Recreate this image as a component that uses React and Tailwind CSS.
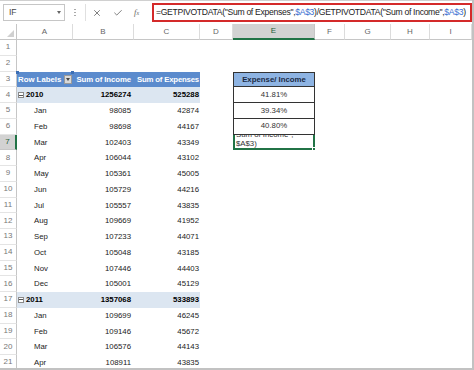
import { X, Check } from 'lucide-react';

// Column letters of the sheet; index 0 is the row-number column
const COLS = ['', 'A', 'B', 'C', 'D', 'E', 'F', 'G', 'H', 'I'];

const FONT = { fontFamily: '"Liberation Sans", Arial, sans-serif' };

const months2010 = [
  ['Jan', 98085, 42874],
  ['Feb', 98698, 44167],
  ['Mar', 102403, 43349],
  ['Apr', 106044, 43102],
  ['May', 105361, 45005],
  ['Jun', 105729, 44216],
  ['Jul', 105557, 43835],
  ['Aug', 109669, 41952],
  ['Sep', 107233, 44071],
  ['Oct', 105048, 43185],
  ['Nov', 107446, 44403],
  ['Dec', 105001, 45129],
];

const months2011 = [
  ['Jan', 109699, 46245],
  ['Feb', 109146, 45672],
  ['Mar', 106576, 44143],
  ['Apr', 108911, 43835],
];

const ratios = ['41.81%', '39.34%', '40.80%'];

function Collapse() {
  return (
    <span className="inline-flex items-center justify-center w-[6px] h-[6px] border border-[#8a8a8a] mr-[2px] bg-white">
      <span className="block w-[4px] h-px bg-[#555]" />
    </span>
  );
}

function RowNum({ n, active }) {
  return (
    <div
      className={`flex items-center justify-center text-[8px] border-b ${
        active
          ? 'bg-[#d2d2d2] text-[#1e5e3a] border-r-2 border-r-[#217346] border-b-[#c6c6c6]'
          : 'bg-white text-[#777] border-r border-r-[#c6c6c6] border-b-[#e4e4e4]'
      }`}
    >
      {n}
    </div>
  );
}

function cellsFor(r) {
  let a = <div />, b = <div />, c = <div />, e = <div />;

  if (r === 3) {
    a = (
      <div className="relative bg-[#5b8bcd] text-white font-bold text-[7.8px] flex items-center pl-[1px] whitespace-nowrap">
        Row Labels
        <span className="absolute right-[1px] top-[3px] w-[8px] h-[9px] bg-[#d9d9d9] border border-[#9a9a9a] flex items-center justify-center">
          <span className="block w-0 h-0 border-l-[2.5px] border-r-[2.5px] border-t-[3px] border-l-transparent border-r-transparent border-t-[#444]" />
        </span>
        <span className="absolute left-[-1px] top-[-1px] w-[3px] h-[3px] bg-[#3c6fb5]" />
        <span className="absolute right-[-1px] top-[-1px] w-[3px] h-[3px] bg-[#3c6fb5]" />
      </div>
    );
    b = (
      <div className="bg-[#5b8bcd] text-white font-bold text-[7.8px] flex items-center justify-end pr-[3px] whitespace-nowrap tracking-[-0.1px]">
        Sum of Income
      </div>
    );
    c = (
      <div className="bg-[#5b8bcd] text-white font-bold text-[7.8px] flex items-center justify-end pr-[1px] whitespace-nowrap tracking-[-0.2px]">
        Sum of Expenses
      </div>
    );
    e = (
      <div className="bg-[#8eb4e3] border border-[#333] text-[#1b2a44] font-bold text-[7.8px] flex items-center justify-center whitespace-nowrap">
        Expense/ Income
      </div>
    );
  } else if (r === 4 || r === 17) {
    const [year, inc, exp] = r === 4 ? ['2010', 1256274, 525288] : ['2011', 1357068, 533893];
    a = (
      <div className="bg-[#dce6f1] font-bold text-[7.8px] text-black flex items-center pl-[1px]">
        <Collapse />
        {year}
      </div>
    );
    b = (
      <div className="bg-[#dce6f1] font-bold text-[7.8px] text-black flex items-center justify-end pr-[3px]">
        {inc}
      </div>
    );
    c = (
      <div className="bg-[#dce6f1] font-bold text-[7.8px] text-black flex items-center justify-end pr-[1px]">
        {exp}
      </div>
    );
  } else {
    let m = null;
    if (r >= 5 && r <= 16) m = months2010[r - 5];
    if (r >= 18) m = months2011[r - 18];
    if (m) {
      a = <div className="text-[7.8px] text-[#222] flex items-center pl-[17px]">{m[0]}</div>;
      b = <div className="text-[7.8px] text-[#222] flex items-center justify-end pr-[3px]">{m[1]}</div>;
      c = <div className="text-[7.8px] text-[#222] flex items-center justify-end pr-[1px]">{m[2]}</div>;
    }
  }

  if (r >= 4 && r <= 6) {
    e = (
      <div className="border-x border-b border-[#333] text-[7.8px] text-[#333] flex items-center justify-center">
        {ratios[r - 4]}
      </div>
    );
  }
  if (r === 7) {
    // Cell in edit mode: the wrapped formula's first line is clipped by the row above
    e = (
      <div className="relative border-x-2 border-b-2 border-[#217346] text-[7.8px] text-[#333] leading-[8px]">
        <div className="absolute inset-0 overflow-hidden">
          <div className="absolute left-[1px] top-[-4px] whitespace-nowrap">Sum of Income",</div>
          <div className="absolute left-[1px] top-[5px]">$A$3)</div>
        </div>
        <span className="absolute right-[-3px] bottom-[-3px] w-[4px] h-[4px] bg-[#217346] border border-white" />
      </div>
    );
  }

  return [a, b, c, <div />, e, <div />, <div />, <div />, <div />];
}

export default function App() {
  const rows = Array.from({ length: 21 }, (_, i) => i + 1);

  return (
    <div
      className="w-[474px] h-[370px] overflow-hidden bg-white border-r-2 border-b-2 border-[#c2c2c2] flex flex-col"
      style={FONT}
    >
      {/* ── Formula bar ─────────────────────────────────────────── */}
      <div className="h-[24px] shrink-0 flex items-center border-t border-[#d0d0d0] bg-white">
        <div className="ml-[3px] w-[62px] h-[17px] border border-[#c6c6c6] flex items-center justify-between pl-[5px] pr-[3px] text-[8.5px] text-[#444]">
          IF
          <span className="block w-0 h-0 border-l-[2.5px] border-r-[2.5px] border-t-[3px] border-l-transparent border-r-transparent border-t-[#666]" />
        </div>
        <div className="w-[20px] flex flex-col items-center gap-[1.5px]">
          <span className="block w-[1.5px] h-[1.5px] bg-[#aaa]" />
          <span className="block w-[1.5px] h-[1.5px] bg-[#aaa]" />
          <span className="block w-[1.5px] h-[1.5px] bg-[#aaa]" />
        </div>
        <div className="w-[66px] h-[17px] border-l border-[#e0e0e0] flex items-center pl-[6px] gap-[11px] text-[#666]">
          <X className="w-[10px] h-[10px]" strokeWidth={2} />
          <Check className="w-[10px] h-[10px]" strokeWidth={2} />
          <span className="text-[8.5px] italic" style={{ fontFamily: '"Liberation Serif", serif' }}>
            f<span className="text-[6px]">x</span>
          </span>
        </div>
        <div className="ml-[1px] flex-1 h-[19px] border-2 border-[#d42a2a] flex items-center pl-[2px] text-[8.6px] text-[#222] whitespace-nowrap overflow-hidden tracking-[-0.3px]">
          =GETPIVOTDATA("Sum of Expenses",<span className="text-[#3a6fd1]">$A$3</span>)/GETPIVOTDATA("Sum of Income",<span className="text-[#3a6fd1]">$A$3</span>)
        </div>
      </div>

      {/* ── Sheet grid ──────────────────────────────────────────── */}
      <div className="grid grid-cols-[17px_56px_61px_66px_33px_82px_30px_46px_39px_42px] grid-rows-[16px] auto-rows-[15.75px]">
        {COLS.map((c, i) =>
          i === 0 ? (
            <div key="corner" className="relative bg-white border-r border-b border-[#c6c6c6]">
              <span className="absolute right-[2px] bottom-[2px] w-0 h-0 border-b-[7px] border-l-[7px] border-b-[#d0d0d0] border-l-transparent" />
            </div>
          ) : (
            <div
              key={c}
              className={`flex items-center justify-center text-[8px] border-r ${
                c === 'E'
                  ? 'bg-[#d2d2d2] text-[#1e5e3a] border-b-2 border-b-[#217346] border-r-[#c6c6c6]'
                  : 'bg-white text-[#666] border-b border-[#c6c6c6] border-r-[#dcdcdc]'
              }`}
            >
              {c}
            </div>
          )
        )}
        {rows.map((r) => (
          <SheetRow key={r} r={r} />
        ))}
      </div>
    </div>
  );
}

function SheetRow({ r }) {
  return (
    <>
      <RowNum n={r} active={r === 7} />
      {cellsFor(r).map((node, i) => (
        <div key={i} className="grid min-w-0">
          {node}
        </div>
      ))}
    </>
  );
}
